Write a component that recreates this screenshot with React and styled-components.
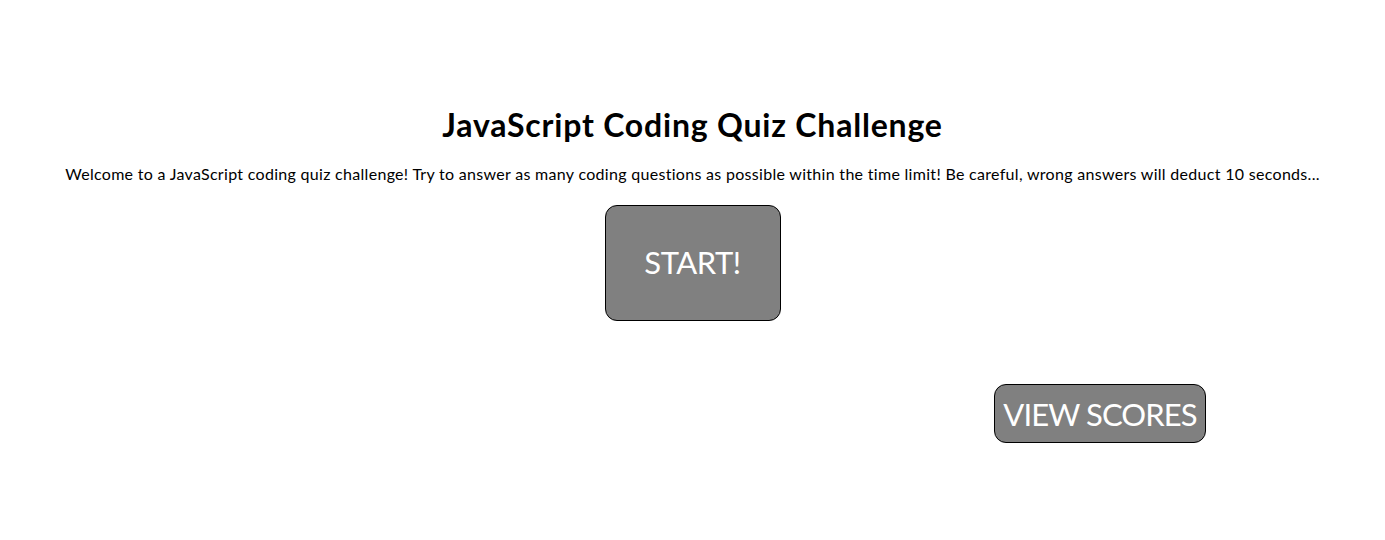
import styled, { createGlobalStyle } from "styled-components";

const GlobalStyle = createGlobalStyle`
    body {
        margin: 0;
        background: #ffffff;
        font-family: "Trebuchet MS", "Lato", "Open Sans", sans-serif;
        color: #000000;
    }
`;

const App = () => {
    return (
        <>
            <GlobalStyle />
            <Page>
                <Title>JavaScript Coding Quiz Challenge</Title>
                <Intro>
                    Welcome to a JavaScript coding quiz challenge! Try to answer as many coding
                    questions as possible within the time limit! Be careful, wrong answers will
                    deduct 10 seconds...
                </Intro>
                <StartBtn>START!</StartBtn>
                <ScoreRow>
                    <ScoreBtn>VIEW SCORES</ScoreBtn>
                </ScoreRow>
            </Page>
        </>
    );
};

export default App;

const Page = styled.div`
    width: 100%;
    display: flex;
    flex-direction: column;
    align-items: center;
    padding-top: 106px;
`;
const Title = styled.h1`
    margin: 0;
    font-size: 32px;
    font-weight: 700;
    line-height: 38px;
    letter-spacing: 0.8px;
`;
const Intro = styled.p`
    margin: 20px 0 0 0;
    font-size: 16px;
    line-height: 20px;
    letter-spacing: 0.3px;
    text-align: center;
`;
const StartBtn = styled.div`
    margin-top: 21px;
    width: 174px;
    height: 114px;
    border: 1px solid #000000;
    border-radius: 12px;
    background-color: #808080;
    color: #ffffff;
    font-size: 31px;
    letter-spacing: -0.5px;
    display: flex;
    justify-content: center;
    align-items: center;
    padding-bottom: 2px;
    box-sizing: content-box;
    height: 112px;
`;
const ScoreRow = styled.div`
    width: 100%;
    display: flex;
    justify-content: flex-end;
    box-sizing: border-box;
    padding-right: 179px;
    margin-top: 63px;
`;
const ScoreBtn = styled.div`
    width: 210px;
    height: 57px;
    border: 1px solid #000000;
    border-radius: 12px;
    background-color: #808080;
    color: #ffffff;
    font-size: 31px;
    letter-spacing: -0.9px;
    display: flex;
    justify-content: center;
    align-items: center;
`;
